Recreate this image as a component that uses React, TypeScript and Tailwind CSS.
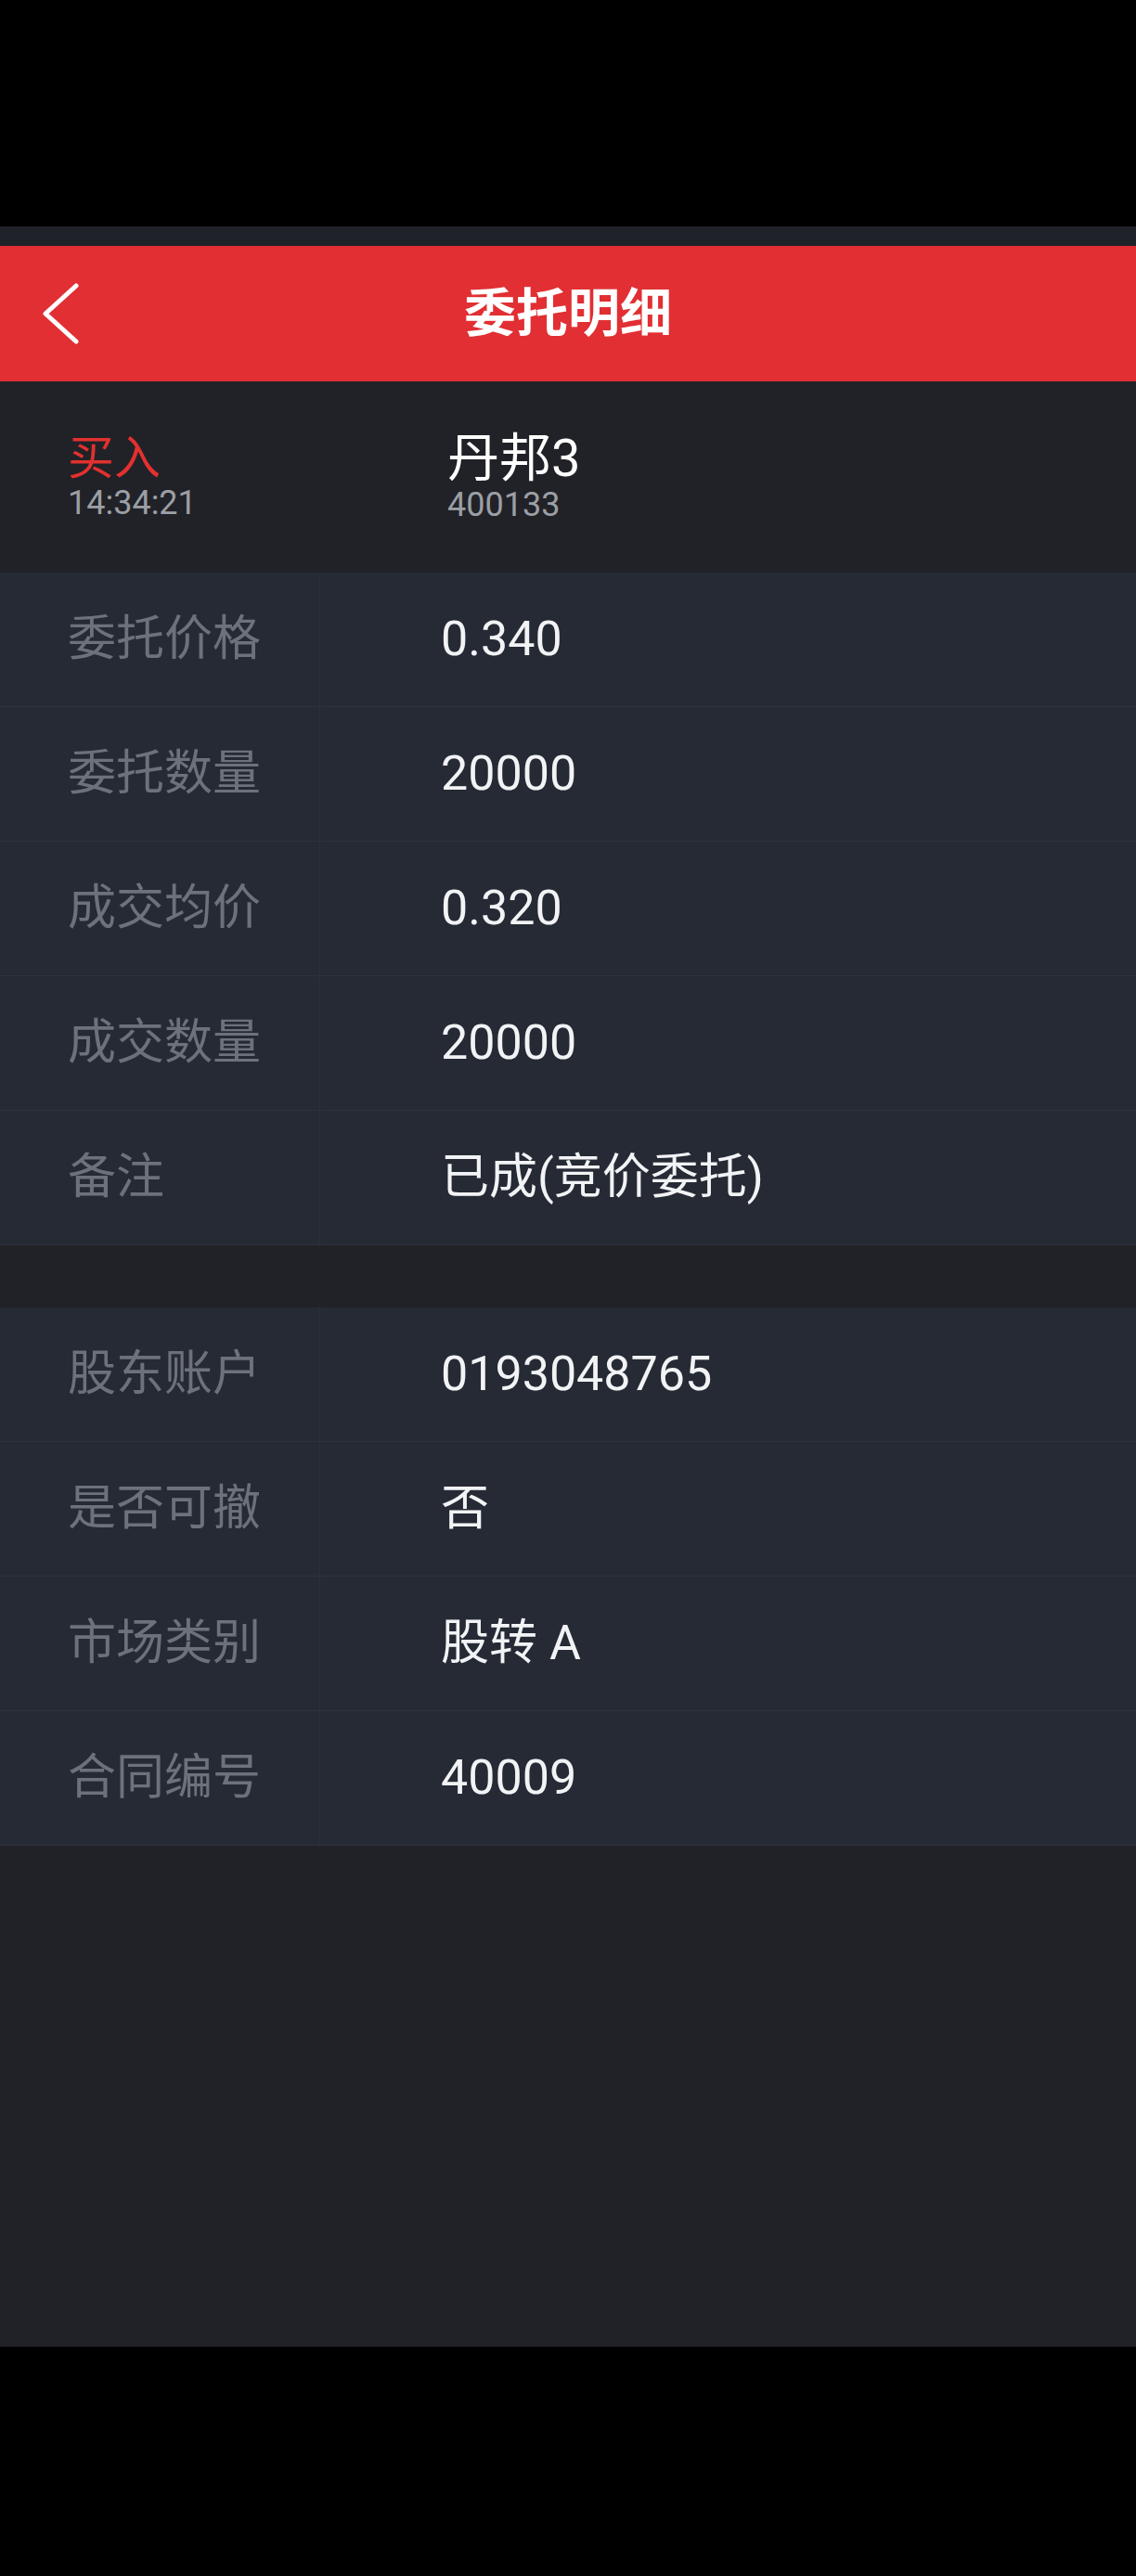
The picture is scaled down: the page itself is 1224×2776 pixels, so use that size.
import React from 'react';

const FONT = "font-['Roboto','Noto_Sans_CJK_SC',sans-serif]";

const orderRows = [
  { label: '委托价格', value: '0.340' },
  { label: '委托数量', value: '20000' },
  { label: '成交均价', value: '0.320' },
  { label: '成交数量', value: '20000' },
  { label: '备注', value: '已成(竞价委托)' },
];

const accountRows = [
  { label: '股东账户', value: '0193048765' },
  { label: '是否可撤', value: '否' },
  { label: '市场类别', value: '股转 A' },
  { label: '合同编号', value: '40009' },
];

function DetailRow({ label, value }: { label: string; value: string }) {
  return (
    <div className="flex h-[145px] border-b border-[#2e323d] bg-[#262a35]">
      <div className="flex w-[345px] shrink-0 items-center border-r border-[#2b2f3a] pl-[73px]">
        <span className="text-[52px] leading-none text-[#6d717a]">{label}</span>
      </div>
      <div className="flex flex-1 items-center pl-[130px]">
        <span className="text-[52px] leading-none text-[#f2f3f5]">{value}</span>
      </div>
    </div>
  );
}

export default function App() {
  return (
    <div className={`flex h-[2776px] w-[1224px] flex-col bg-black ${FONT}`}>
      {/* status bar area */}
      <div className="h-[244px] shrink-0 bg-black" />
      <div className="h-[21px] shrink-0 bg-[#1f2229]" />

      {/* nav bar */}
      <div className="flex h-[146px] shrink-0 items-center bg-[#e12f33]">
        <div className="flex w-[160px] items-center pl-[45px]">
          <svg width="40" height="66" viewBox="0 0 40 66" fill="none">
            <polyline
              points="37,3 4,33 37,63"
              stroke="#ffffff"
              strokeWidth="5"
              strokeLinecap="round"
              strokeLinejoin="round"
            />
          </svg>
        </div>
        <div className="flex-1 text-center text-[56px] font-bold leading-none text-white">
          委托明细
        </div>
        <div className="w-[160px]" />
      </div>

      {/* order summary */}
      <div className="flex h-[206px] shrink-0 items-center bg-[#212227]">
        <div className="flex w-[482px] shrink-0 flex-col pl-[73px]">
          <span className="text-[50px] leading-[56px] text-[#e2312f]">买入</span>
          <span className="text-[36px] leading-[40px] text-[#9c9fa5]">14:34:21</span>
        </div>
        <div className="flex flex-col">
          <span className="text-[56px] leading-[60px] text-white">丹邦3</span>
          <span className="text-[36px] leading-[40px] text-[#9c9fa5]">400133</span>
        </div>
      </div>

      {/* order details */}
      <div className="flex shrink-0 flex-col">
        {orderRows.map((r) => (
          <DetailRow key={r.label} label={r.label} value={r.value} />
        ))}
      </div>

      <div className="h-[67px] shrink-0 bg-[#212227]" />

      {/* account details */}
      <div className="flex shrink-0 flex-col">
        {accountRows.map((r) => (
          <DetailRow key={r.label} label={r.label} value={r.value} />
        ))}
      </div>

      <div className="h-[540px] shrink-0 bg-[#212227]" />
      <div className="flex-1 bg-black" />
    </div>
  );
}
